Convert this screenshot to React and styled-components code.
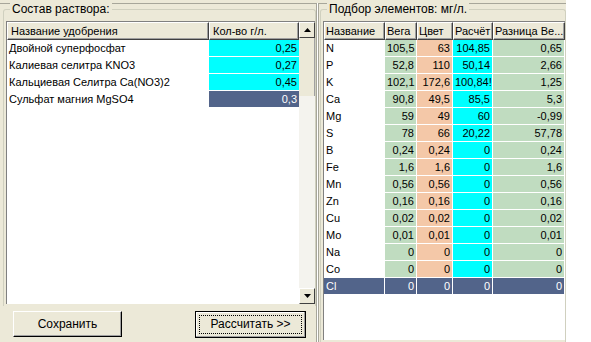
import React from 'react';
import styled, { createGlobalStyle } from 'styled-components';

const Global = createGlobalStyle`
  body {
    margin: 0;
    background: #ffffff;
    font-family: "Liberation Sans", Arial, sans-serif;
    font-size: 11px;
    color: #000;
  }
`;

const fertilizers = [
  { name: 'Двойной суперфосфат', qty: '0,25' },
  { name: 'Калиевая селитра KNO3', qty: '0,27' },
  { name: 'Кальциевая Селитра Ca(NO3)2', qty: '0,45' },
  { name: 'Сульфат магния MgSO4', qty: '0,3', selected: true },
];

const elements = [
  ['N', '105,5', '63', '104,85', '0,65'],
  ['P', '52,8', '110', '50,14', '2,66'],
  ['K', '102,1', '172,6', '100,84!', '1,25'],
  ['Ca', '90,8', '49,5', '85,5', '5,3'],
  ['Mg', '59', '49', '60', '-0,99'],
  ['S', '78', '66', '20,22', '57,78'],
  ['B', '0,24', '0,24', '0', '0,24'],
  ['Fe', '1,6', '1,6', '0', '1,6'],
  ['Mn', '0,56', '0,56', '0', '0,56'],
  ['Zn', '0,16', '0,16', '0', '0,16'],
  ['Cu', '0,02', '0,02', '0', '0,02'],
  ['Mo', '0,01', '0,01', '0', '0,01'],
  ['Na', '0', '0', '0', '0'],
  ['Co', '0', '0', '0', '0'],
  ['Cl', '0', '0', '0', '0'],
];

const colWidths = [61, 32, 36, 40, 72];
const colColors = ['#ffffff', '#c0dcc0', '#f4c8a8', '#00ffff', '#c0dcc0'];

const App = () => (
  <>
    <Global />
    <Window>
      <LeftPanel>
        <Group>
          <Legend>Состав раствора:</Legend>
          <LeftGrid>
            <GridMain>
              <HeaderRow>
                <HeadCell $w={202}>Название удобрения</HeadCell>
                <HeadCell $w={90}>Кол-во г/л.</HeadCell>
              </HeaderRow>
              {fertilizers.map(f => (
                <Row key={f.name}>
                  <Cell $w={202} $bg="#ffffff">{f.name}</Cell>
                  <Cell $w={90} $bg={f.selected ? '#52648a' : '#00ffff'} $right $sel={f.selected}>
                    {f.qty}
                  </Cell>
                </Row>
              ))}
            </GridMain>
            <ScrollBar>
              <ArrowBtn>
                <svg width="7" height="4" viewBox="0 0 7 4"><path d="M3.5 0L7 4H0z" fill="#000" /></svg>
              </ArrowBtn>
              <Thumb />
              <Track />
              <ArrowBtn>
                <svg width="7" height="4" viewBox="0 0 7 4"><path d="M0 0H7L3.5 4z" fill="#000" /></svg>
              </ArrowBtn>
            </ScrollBar>
          </LeftGrid>
        </Group>
        <ButtonBar>
          <Button>Сохранить</Button>
          <Button $default>
            <Focus>Рассчитать &gt;&gt;</Focus>
          </Button>
        </ButtonBar>
      </LeftPanel>
      <Splitter />
      <RightPanel>
        <Group $right>
          <Legend>Подбор элементов: мг/л.</Legend>
          <RightGrid>
            <HeaderRow>
              {['Название', 'Вега', 'Цвет', 'Расчёт', 'Разница Ве...'].map((h, i) => (
                <HeadCell key={h} $w={colWidths[i]} $tight>{h}</HeadCell>
              ))}
            </HeaderRow>
            {elements.map((row, r) => {
              const sel = r === elements.length - 1;
              return (
                <DataRow key={row[0]}>
                  {row.map((v, i) => (
                    <DataCell
                      key={i}
                      $w={colWidths[i]}
                      $bg={sel ? '#52648a' : colColors[i]}
                      $right={i > 0}
                      $sel={sel}
                    >
                      {v}
                    </DataCell>
                  ))}
                </DataRow>
              );
            })}
          </RightGrid>
        </Group>
      </RightPanel>
    </Window>
  </>
);

export default App;

const Window = styled.div`
  display: flex;
  width: 566px;
  height: 342px;
  box-sizing: border-box;
  background: #ece9d8;
  border-top: 3px solid #ece9d8;
  box-shadow: inset 0 1px 0 #a7a69a;
  overflow: hidden;
`;

const LeftPanel = styled.div`
  width: 316px;
  display: flex;
  flex-direction: column;
  border-right: 1px solid #a7a69a;
`;

const Splitter = styled.div`
  width: 2px;
  border-right: 1px solid #ffffff;
  background: #ece9d8;
`;

const RightPanel = styled.div`
  flex: 1;
  display: flex;
  flex-direction: column;
  border-left: 1px solid #a7a69a;
`;

const Group = styled.div`
  position: relative;
  flex: 1;
  display: flex;
  flex-direction: column;
  margin: 6px ${p => (p.$right ? '1px' : '0')} 0 ${p => (p.$right ? '1px' : '3px')};
  padding: 11px 0 2px 2px;
  border: 1px solid #d0d0bf;
  border-bottom: none;
  border-radius: 3px 3px 0 0;
  min-height: 0;
`;

const Legend = styled.div`
  position: absolute;
  top: -7px;
  left: 6px;
  padding: 0 2px;
  background: #ece9d8;
  line-height: 13px;
  font-size: 12px;
  color: #000;
`;

const LeftGrid = styled.div`
  flex: 1;
  display: flex;
  background: #ffffff;
  border-top: 1px solid #808080;
  border-left: 1px solid #808080;
`;

const GridMain = styled.div`
  flex: 1;
  display: flex;
  flex-direction: column;
`;

const HeaderRow = styled.div`
  display: flex;
  height: 18px;
`;

const HeadCell = styled.div`
  width: ${p => p.$w}px;
  box-sizing: border-box;
  background: #ece9d8;
  border-top: 1px solid #ffffff;
  border-left: 1px solid #ffffff;
  border-right: 1px solid #404040;
  border-bottom: 1px solid #404040;
  box-shadow: inset -1px -1px 0 #a0a0a0;
  padding: 0 ${p => (p.$tight ? '1px' : '3px')};
  line-height: 16px;
  white-space: nowrap;
  overflow: hidden;
`;

const Row = styled.div`
  display: flex;
  height: 17px;
`;

const Cell = styled.div`
  width: ${p => p.$w}px;
  box-sizing: border-box;
  background: ${p => p.$bg};
  color: ${p => (p.$sel ? '#ffffff' : '#000')};
  text-align: ${p => (p.$right ? 'right' : 'left')};
  padding: 0 2px 0 2px;
  border-bottom: 1px solid #ffffff;
  line-height: 16px;
  white-space: nowrap;
  overflow: hidden;
`;

const ScrollBar = styled.div`
  width: 16px;
  display: flex;
  flex-direction: column;
  background: #f4f3ee;
`;

const ArrowBtn = styled.div`
  height: 16px;
  box-sizing: border-box;
  display: flex;
  align-items: center;
  justify-content: center;
  background: #ece9d8;
  border-top: 1px solid #ffffff;
  border-left: 1px solid #ffffff;
  border-right: 1px solid #404040;
  border-bottom: 1px solid #404040;
`;

const Thumb = styled.div`
  height: 58px;
  box-sizing: border-box;
  background: #ece9d8;
  border-right: 1px solid #a0a0a0;
`;

const Track = styled.div`
  flex: 1;
  background: #f4f3ee;
`;

const ButtonBar = styled.div`
  height: 36px;
  display: flex;
  align-items: center;
  justify-content: space-between;
  padding: 0 10px 0 13px;
  font-size: 12px;
`;

const Button = styled.div`
  width: ${p => (p.$default ? '111px' : '109px')};
  height: ${p => (p.$default ? '27px' : '26px')};
  box-sizing: border-box;
  display: flex;
  align-items: center;
  justify-content: center;
  background: #ece9d8;
  border: 1px solid ${p => (p.$default ? '#000' : '#ffffff')};
  border-right-color: #000;
  border-bottom-color: #000;
  box-shadow: inset -1px -1px 0 #a0a0a0${p => (p.$default ? ', inset 1px 1px 0 #ffffff' : '')};
  padding: 3px;
`;

const Focus = styled.div`
  flex: 1;
  align-self: stretch;
  display: flex;
  align-items: center;
  justify-content: center;
  border: 1px dotted #000;
`;

const RightGrid = styled.div`
  flex: 1;
  background: #ffffff;
  border-top: 1px solid #808080;
  border-left: 1px solid #808080;
`;

const DataRow = styled.div`
  display: flex;
  height: 17px;
`;

const DataCell = styled.div`
  width: ${p => p.$w}px;
  box-sizing: border-box;
  background: ${p => p.$bg};
  color: ${p => (p.$sel ? '#ffffff' : '#000')};
  text-align: ${p => (p.$right ? 'right' : 'left')};
  padding: 0 2px;
  border-right: 1px solid #ffffff;
  border-bottom: 1px solid #ffffff;
  line-height: 16px;
  white-space: nowrap;
  overflow: hidden;
`;
